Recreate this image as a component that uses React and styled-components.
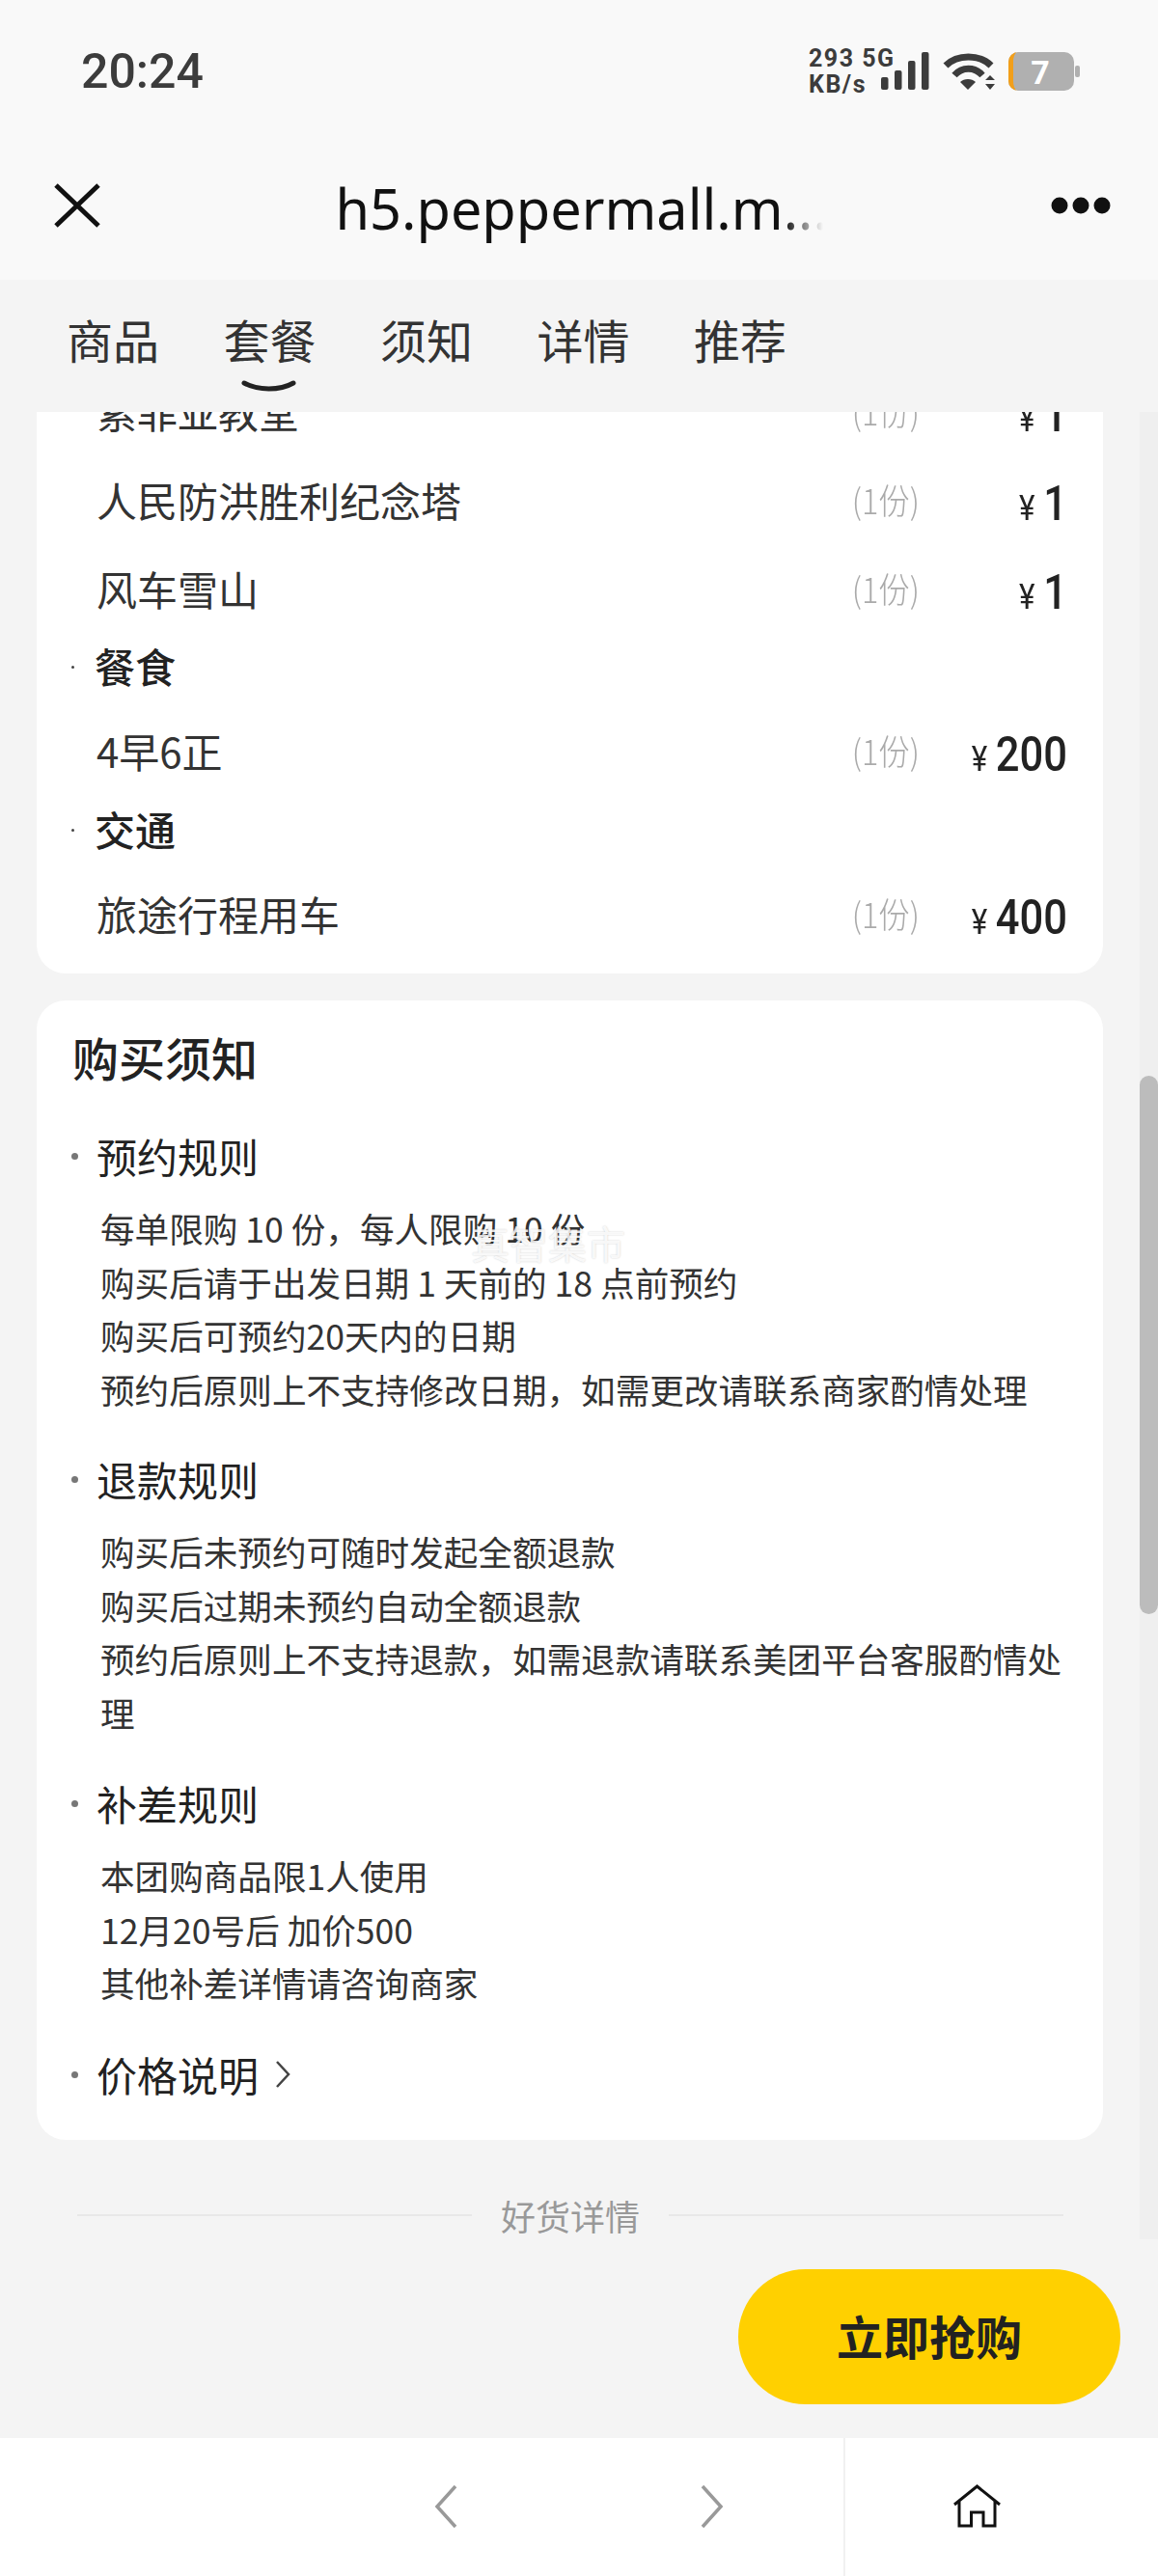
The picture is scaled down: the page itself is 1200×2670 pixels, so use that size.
import React from "react";
import styled, { createGlobalStyle } from "styled-components";

const FONT = `"Noto Sans CJK SC", "Noto Sans", sans-serif`;
const NUM_FONT = `Roboto, "Noto Sans CJK SC", sans-serif`;

const GlobalStyle = createGlobalStyle`
  html, body {
    margin: 0;
    padding: 0;
    background: #f4f4f4;
  }
  * {
    box-sizing: border-box;
  }
`;

const Page = styled.div`
  position: relative;
  width: 1200px;
  height: 2670px;
  display: flex;
  flex-direction: column;
  overflow: hidden;
  font-family: ${FONT};
  color: #222;
  background: #f4f4f4;
`;

const Header = styled.header`
  height: 290px;
  background: #f9f9f9;
  display: flex;
  flex-direction: column;
`;

const StatusBar = styled.div`
  height: 148px;
  padding: 0 81px 0 84px;
  display: flex;
  align-items: center;
  justify-content: space-between;
`;

const Clock = styled.span`
  font-family: Roboto, sans-serif;
  font-size: 50px;
  font-weight: 500;
  color: #3c3c3c;
`;

const StatusIcons = styled.div`
  display: flex;
  align-items: center;
`;

const NetSpeed = styled.div`
  width: 75px;
  font-family: Roboto, sans-serif;
  font-size: 25px;
  line-height: 27px;
  font-weight: 700;
  letter-spacing: 1.5px;
  color: #3c3c3c;
  white-space: nowrap;
`;

const NavBar = styled.div`
  height: 142px;
  padding: 0 48px 12px 56px;
  display: flex;
  align-items: center;
  justify-content: space-between;
`;

const NavTitle = styled.div`
  width: 505px;
  margin: 4px 0 0 8px;
  font-family: "Noto Sans", sans-serif;
  font-size: 57.6px;
  color: #111;
  white-space: nowrap;
  overflow: hidden;
  mask-image: linear-gradient(to right, #000 92%, transparent 100%);
`;

const Tabs = styled.nav`
  height: 137px;
  padding: 0 0 0 69px;
  display: flex;
  gap: 66.5px;
`;

const Tab = styled.div`
  position: relative;
  height: 127px;
  font-size: 48px;
  line-height: 123px;
  color: #333;
`;

const TabMark = styled.svg`
  position: absolute;
  left: 18px;
  bottom: 11px;
`;

const Content = styled.main`
  position: relative;
  flex: 1;
  overflow: hidden;
  padding: 0 57px 0 38px;
`;

const Card = styled.section`
  background: #fff;
  border-radius: 30px;
  padding: ${(p) => p.$padding};
  margin-top: ${(p) => p.$top};
`;

const ItemRow = styled.div`
  height: ${(p) => p.$height || 92}px;
  padding: 0 37px 0 62px;
  display: grid;
  grid-template-columns: 1fr 70px 153px;
  align-items: center;
  font-size: 42px;
  color: #333;
`;

const Qty = styled.span`
  display: block;
  margin-left: -4px;
  font-size: 36px;
  font-weight: 300;
  color: #aaa;
  white-space: nowrap;
  text-align: center;
  transform: scaleX(0.9);
`;

const Price = styled.span`
  display: block;
  margin-top: 14px;
  font-family: ${NUM_FONT};
  font-size: 50px;
  line-height: 60px;
  font-weight: 500;
  color: #222;
  text-align: right;
  transform: scaleX(0.87);
  transform-origin: right center;
`;

const Yen = styled.small`
  font-size: 36px;
  font-weight: 400;
  margin-right: 10px;
`;

const GroupTitle = styled.div`
  position: relative;
  height: ${(p) => p.$height}px;
  padding-left: 60px;
  font-size: 42px;
  font-weight: 500;
  line-height: ${(p) => p.$height}px;
  color: #222;

  &::before {
    content: "";
    position: absolute;
    left: 36px;
    top: 50%;
    width: 3px;
    height: 3px;
    border-radius: 50%;
    background: #444;
  }
`;

const NoticeTitle = styled.h2`
  margin: 0 0 0 37px;
  font-size: 48px;
  line-height: 70px;
  font-weight: 500;
  color: #222;
`;

const Rule = styled.div`
  margin-top: ${(p) => p.$top}px;
`;

const RuleTitle = styled.h3`
  position: relative;
  margin: 0;
  padding-left: 62px;
  font-size: 42px;
  line-height: 60px;
  font-weight: 400;
  color: #222;
  display: flex;
  align-items: center;
  gap: 17px;

  &::before {
    content: "";
    position: absolute;
    left: 36px;
    top: 27px;
    width: 7px;
    height: 7px;
    border-radius: 50%;
    background: #777;
  }
`;

const RuleBody = styled.div`
  margin: 17px 38px 0 66px;
  font-size: 35.6px;
  line-height: 55.5px;
  color: #333;
`;

const Divider = styled.div`
  margin: 48px 0 0 42px;
  width: 1022px;
  display: flex;
  align-items: center;
  gap: 30px;
  font-size: 36px;
  line-height: 60px;
  color: #999;

  &::before,
  &::after {
    content: "";
    flex: 1;
    height: 2px;
    background: #e8e8e8;
  }
`;

const ScrollTrack = styled.div`
  position: absolute;
  top: 0;
  right: 0;
  width: 19px;
  height: 1894px;
  background: #efefef;
`;

const ScrollThumb = styled.div`
  position: absolute;
  top: 688px;
  left: 0;
  width: 19px;
  height: 558px;
  border-radius: 10px;
  background: #bcbcbc;
`;

const Watermark = styled.div`
  position: absolute;
  left: 488px;
  top: 836px;
  font-size: 40px;
  line-height: 50px;
  color: rgba(255, 255, 255, 0.85);
  text-shadow: 0 0 2px rgba(0, 0, 0, 0.2);
`;

const BuyButton = styled.button`
  position: absolute;
  right: 39px;
  bottom: 35px;
  width: 396px;
  height: 140px;
  padding: 0 0 4px;
  border: 0;
  border-radius: 70px;
  background: #ffd000;
  font-family: ${FONT};
  font-size: 48px;
  font-weight: 700;
  color: #222;
`;

const Toolbar = styled.footer`
  height: 143px;
  background: #fff;
  display: flex;
`;

const ToolbarNav = styled.div`
  width: 876px;
  padding: 0 0 2px 450px;
  display: flex;
  align-items: center;
  gap: 252px;
  border-right: 2px solid #f1f1f1;
`;

const ToolbarHome = styled.div`
  flex: 1;
  padding: 0 0 2px 112px;
  display: flex;
  align-items: center;
`;

const ITEMS = [
  { name: "索菲亚教堂", price: "1" },
  { name: "人民防洪胜利纪念塔", price: "1" },
  { name: "风车雪山", price: "1" },
];

const RULES = [
  {
    title: "预约规则",
    top: 38,
    lines: [
      "每单限购 10 份，每人限购 10 份",
      "购买后请于出发日期 1 天前的 18 点前预约",
      "购买后可预约20天内的日期",
      "预约后原则上不支持修改日期，如需更改请联系商家酌情处理",
    ],
  },
  {
    title: "退款规则",
    top: 36,
    lines: [
      "购买后未预约可随时发起全额退款",
      "购买后过期未预约自动全额退款",
      "预约后原则上不支持退款，如需退款请联系美团平台客服酌情处理",
    ],
  },
  {
    title: "补差规则",
    top: 37,
    lines: ["本团购商品限1人使用", "12月20号后 加价500", "其他补差详情请咨询商家"],
  },
];

function Item({ name, price }) {
  return (
    <ItemRow>
      <span>{name}</span>
      <Qty>(1份)</Qty>
      <Price>
        <Yen>¥</Yen>
        {price}
      </Price>
    </ItemRow>
  );
}

function SignalIcons() {
  return (
    <>
      <svg width="50" height="40" viewBox="0 0 50 40">
        <rect x="0" y="26" width="7.5" height="13" rx="2" fill="#3c3c3c" />
        <rect x="14" y="19" width="7.5" height="20" rx="2" fill="#3c3c3c" />
        <rect x="28" y="9" width="7.5" height="30" rx="2" fill="#3c3c3c" />
        <rect x="42" y="0" width="7.5" height="39" rx="2" fill="#3c3c3c" />
      </svg>
      <svg width="55" height="40" viewBox="0 0 55 40" style={{ marginLeft: 14 }}>
        <path d="M3 14C15 2 38 2 50 14" fill="none" stroke="#3c3c3c" strokeWidth="7" />
        <path d="M12 24C20 15 33 15 41 24" fill="none" stroke="#3c3c3c" strokeWidth="7" />
        <path d="M18 31C22 27 30 27 34 31L26 39Z" fill="#3c3c3c" />
        <path d="M44 29L49 24L54 29ZM44 33H54L49 39Z" fill="#3c3c3c" />
      </svg>
      <svg width="74" height="40" viewBox="0 0 74 40" style={{ marginLeft: 13 }}>
        <path d="M10 0H58A10 10 0 0 1 68 10V30A10 10 0 0 1 58 40H10A10 10 0 0 1 0 30V10A10 10 0 0 1 10 0Z" fill="#b0b0b0" />
        <path d="M10 0A10 10 0 0 0 0 10V30A10 10 0 0 0 10 40H9A5 10 0 0 1 5 30V10A5 10 0 0 1 9 0Z" fill="#f29f1a" />
        <rect x="69" y="14" width="5" height="12" rx="2" fill="#b0b0b0" />
        <text x="33" y="33" textAnchor="middle" fontFamily="Roboto, sans-serif" fontSize="34" fontWeight="700" fill="#fff">7</text>
      </svg>
    </>
  );
}

export default function App() {
  return (
    <Page>
      <GlobalStyle />
      <Header>
        <StatusBar>
          <Clock>20:24</Clock>
          <StatusIcons>
            <NetSpeed>
              293 5G
              <br />
              KB/s
            </NetSpeed>
            <SignalIcons />
          </StatusIcons>
        </StatusBar>
        <NavBar>
          <svg width="48" height="46" viewBox="0 0 48 46">
            <path d="M2 2L46 44M46 2L2 44" fill="none" stroke="#111" strokeWidth="5" />
          </svg>
          <NavTitle>h5.peppermall.m...</NavTitle>
          <svg width="64" height="20" viewBox="0 0 64 20">
            <circle cx="10" cy="10" r="8.5" fill="#111" />
            <circle cx="32" cy="10" r="8.5" fill="#111" />
            <circle cx="54" cy="10" r="8.5" fill="#111" />
          </svg>
        </NavBar>
      </Header>

      <Tabs>
        <Tab>商品</Tab>
        <Tab>
          套餐
          <TabMark width="57" height="12" viewBox="0 0 57 12">
            <path d="M3 3C17 11 40 11 54 3" fill="none" stroke="#222" strokeWidth="5" strokeLinecap="round" />
          </TabMark>
        </Tab>
        <Tab>须知</Tab>
        <Tab>详情</Tab>
        <Tab>推荐</Tab>
      </Tabs>

      <Content>
        <Card $padding="0 0 6px 0" $top="-48px">
          {ITEMS.map((item) => (
            <Item key={item.name} {...item} />
          ))}
          <GroupTitle $height={70}>餐食</GroupTitle>
          <ItemRow $height={104}>
            <span>4早6正</span>
            <Qty>(1份)</Qty>
            <Price>
              <Yen>¥</Yen>200
            </Price>
          </ItemRow>
          <GroupTitle $height={60}>交通</GroupTitle>
          <ItemRow $height={114}>
            <span>旅途行程用车</span>
            <Qty>(1份)</Qty>
            <Price>
              <Yen>¥</Yen>400
            </Price>
          </ItemRow>
        </Card>

        <Card $padding="23px 0 38px 0" $top="28px">
          <NoticeTitle>购买须知</NoticeTitle>
          {RULES.map((rule) => (
            <Rule key={rule.title} $top={rule.top}>
              <RuleTitle>{rule.title}</RuleTitle>
              <RuleBody>
                {rule.lines.map((line) => (
                  <div key={line}>{line}</div>
                ))}
              </RuleBody>
            </Rule>
          ))}
          <Rule $top={37}>
            <RuleTitle>
              价格说明
              <svg width="16" height="30" viewBox="0 0 16 30">
                <path d="M2 2L14 15L2 28" fill="none" stroke="#444" strokeWidth="2.5" />
              </svg>
            </RuleTitle>
          </Rule>
        </Card>

        <Divider>好货详情</Divider>
        <Watermark>真智集市</Watermark>
        <ScrollTrack>
          <ScrollThumb />
        </ScrollTrack>
        <BuyButton>立即抢购</BuyButton>
      </Content>

      <Toolbar>
        <ToolbarNav>
          <svg width="24" height="46" viewBox="0 0 24 46">
            <path d="M22 2L3 23L22 44" fill="none" stroke="#999" strokeWidth="3.5" />
          </svg>
          <svg width="24" height="46" viewBox="0 0 24 46">
            <path d="M2 2L21 23L2 44" fill="none" stroke="#999" strokeWidth="3.5" />
          </svg>
        </ToolbarNav>
        <ToolbarHome>
          <svg width="50" height="46" viewBox="0 0 50 46">
            <path d="M1 21L24.5 2L48 21M6 17V43H18.5V29H31V43H43V17" fill="none" stroke="#111" strokeWidth="3" />
          </svg>
        </ToolbarHome>
      </Toolbar>
    </Page>
  );
}
